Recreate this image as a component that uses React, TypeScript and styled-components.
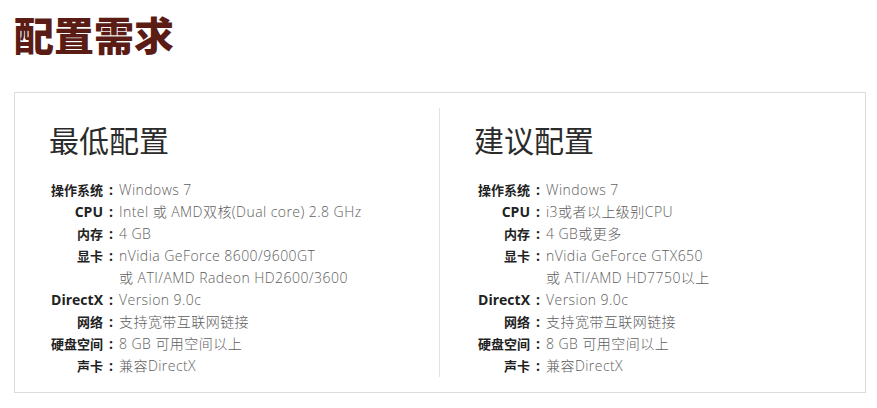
import styled, { createGlobalStyle } from "styled-components";

const GlobalStyle = createGlobalStyle`
  body {
    margin: 0;
    background: #fff;
    font-family: "Open Sans", "Noto Sans CJK SC", sans-serif;
  }
`;

const minSpec = [
    { label: "操作系统", value: ["Windows 7"] },
    { label: "CPU", value: ["Intel 或 AMD双核(Dual core) 2.8 GHz"] },
    { label: "内存", value: ["4 GB"] },
    { label: "显卡", value: ["nVidia GeForce 8600/9600GT", "或 ATI/AMD Radeon HD2600/3600"] },
    { label: "DirectX", value: ["Version 9.0c"] },
    { label: "网络", value: ["支持宽带互联网链接"] },
    { label: "硬盘空间", value: ["8 GB 可用空间以上"] },
    { label: "声卡", value: ["兼容DirectX"] },
];

const recSpec = [
    { label: "操作系统", value: ["Windows 7"] },
    { label: "CPU", value: ["i3或者以上级别CPU"] },
    { label: "内存", value: ["4 GB或更多"] },
    { label: "显卡", value: ["nVidia GeForce GTX650", "或 ATI/AMD HD7750以上"] },
    { label: "DirectX", value: ["Version 9.0c"] },
    { label: "网络", value: ["支持宽带互联网链接"] },
    { label: "硬盘空间", value: ["8 GB 可用空间以上"] },
    { label: "声卡", value: ["兼容DirectX"] },
];

// latin labels (CPU, DirectX) are drawn a bit larger than the chinese ones
const isLatin = (text: string) => /^[A-Za-z]+$/.test(text);

const SpecTable = ({ rows, labelWidth }: { rows: typeof minSpec, labelWidth: number }) => (
    <SpecList>
        {rows.map((row) => (
            <Row key={row.label}>
                <Label $width={labelWidth} $latin={isLatin(row.label)}>{row.label}</Label>
                <Colon>:</Colon>
                <Value>{row.value.map((line) => <div key={line}>{line}</div>)}</Value>
            </Row>
        ))}
    </SpecList>
);

export default function App() {
    return (<Page>
        <GlobalStyle />
        <Title>配置需求</Title>
        <Box>
            <Column>
                <Heading>最低配置</Heading>
                <SpecTable rows={minSpec} labelWidth={54} />
            </Column>
            <Column $divided>
                <Heading>建议配置</Heading>
                <SpecTable rows={recSpec} labelWidth={56} />
            </Column>
        </Box>
    </Page>)
}

const Page = styled.div`
  padding: 14px 0 0 14px;
`;

const Title = styled.h1`
  margin: 0;
  font-family: "Noto Sans CJK SC", sans-serif;
  font-size: 40px;
  line-height: 40px;
  font-weight: 900;
  color: #5a1c15;
`;

const Box = styled.div`
  margin-top: 38px;
  width: 852px;
  box-sizing: border-box;
  border: 1px solid #dcdcdc;
  padding: 15px 0;
  display: grid;
  grid-template-columns: 424px 1fr;
`;

const Column = styled.div<{ $divided?: boolean }>`
  padding-left: 34px;
  border-left: ${(props) => props.$divided ? "1px solid #e2e2e2" : "none"};
`;

const Heading = styled.h2`
  margin: 16px 0 25px;
  font-family: "Noto Sans CJK SC", sans-serif;
  font-size: 30px;
  line-height: 30px;
  font-weight: 400;
  color: #2b2b2b;
`;

const SpecList = styled.div`
  display: flex;
  flex-direction: column;
`;

const Row = styled.div`
  display: flex;
  line-height: 22px;
`;

const Label = styled.span<{ $width: number, $latin?: boolean }>`
  width: ${(props) => props.$width}px;
  flex-shrink: 0;
  text-align: right;
  white-space: nowrap;
  font-family: "Open Sans", "Noto Sans CJK SC", sans-serif;
  font-size: ${(props) => props.$latin ? "14px" : "13px"};
  font-weight: 700;
  color: #222;
`;

const Colon = styled.span`
  width: 16px;
  flex-shrink: 0;
  text-align: center;
  font-family: "Open Sans", sans-serif;
  font-weight: 700;
  font-size: 14px;
  color: #222;
`;

const Value = styled.div`
  font-family: "Open Sans", "Noto Sans CJK SC", sans-serif;
  font-size: 14px;
  font-weight: 300;
  letter-spacing: 0.45px;
  color: #5e5e5e;
  white-space: nowrap;
`;
